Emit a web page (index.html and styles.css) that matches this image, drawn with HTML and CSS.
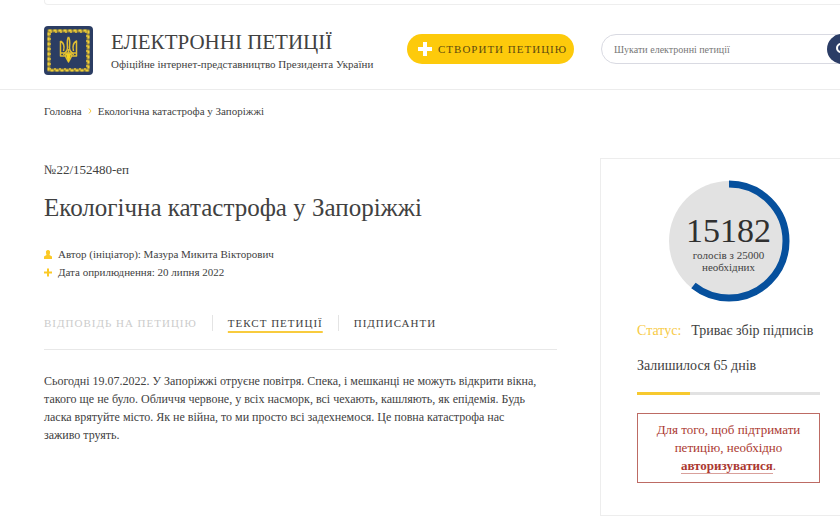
FILE: index.html
```html
<!DOCTYPE html>
<html lang="uk">

<head>
    <meta charset="UTF-8">
    <meta name="viewport" content="width=device-width, initial-scale=1">
    <title>Електронні петиції</title>
    <link rel="stylesheet" href="styles.css">
</head>

<body>
    <header class="header">
        <div class="wrap">
            <div class="top-panel"></div>
            <div class="header-row">
                <a class="brand" href="#">
                    <svg class="brand-logo" viewBox="0 0 49 49" aria-hidden="true">
                        <rect width="49" height="49" rx="4" fill="#2b3d63"/>
                        <rect x="5" y="5" width="39" height="39" fill="none" stroke="#8f8140" stroke-width="3"/>
                        <rect x="4.500" y="4.500" width="40" height="40" fill="none" stroke="#f0cf35" stroke-width="2" stroke-dasharray="3 2"/>
                        <rect x="6" y="6" width="37" height="37" fill="none" stroke="#e3c236" stroke-width="1.500" stroke-dasharray="2 3"/>
                        <g fill="none" stroke="#dfbd32" stroke-width="1.500" stroke-linejoin="round">
                            <path d="M24.500 11c-2 3-1 8-1 11 0 4-3 4-4 7M24.500 11c2 3 1 8 1 11 0 4 3 4 4 7"/>
                            <path d="M16.500 15v15h5c1 3 2 4 3 6 1-2 2-3 3-6h5V15c-4 2-4 6-3 10M16.500 15c4 2 4 6 3 10"/>
                            <path d="M16.500 27h16M24.500 23v12M21 30c1-3 3-3 3.500 0 .5-3 2.500-3 3.500 0"/>
                        </g>
                        <path d="M22 28h5l-1 4-1.500 4-1.500-4z" fill="#f5d21f"/>
                    </svg>
                    <span class="brand-text">
                        <span class="brand-title">ЕЛЕКТРОННІ ПЕТИЦІЇ</span>
                        <span class="brand-sub">Офіційне інтернет-представництво Президента України</span>
                    </span>
                </a>
                <button type="button" class="btn-create">
                    <svg class="btn-plus" viewBox="0 0 14 14" aria-hidden="true">
                        <path d="M5 0h4v5h5v4H9v5H5V9H0V5h5z" fill="#fff"/>
                    </svg>
                    СТВОРИТИ ПЕТИЦІЮ
                </button>
                <form class="search">
                    <input type="search" name="q" placeholder="Шукати електронні петиції" aria-label="Шукати електронні петиції">
                    <button type="submit" class="search-btn" aria-label="Пошук">
                        <svg viewBox="0 0 12 12" aria-hidden="true">
                            <circle cx="5" cy="5" r="4" fill="none" stroke="#fff" stroke-width="2"/>
                            <path d="M8 8l3 3" stroke="#fff" stroke-width="2"/>
                        </svg>
                    </button>
                </form>
            </div>
        </div>
    </header>

    <div class="wrap">
        <nav class="breadcrumbs">
            <a href="#">Головна</a>
            <svg class="crumb-arrow" viewBox="0 0 4 6" aria-hidden="true">
                <path d="M1 0.500L3 3 1 5.500" fill="none" stroke="#f5c842"/>
            </svg>
            <span>Екологічна катастрофа у Запоріжжі</span>
        </nav>

        <div class="content">
            <main class="petition">
                <div class="petition-number">№22/152480-еп</div>
                <h1>Екологічна катастрофа у Запоріжжі</h1>
                <ul class="meta">
                    <li>
                        <svg viewBox="0 0 8 9" aria-hidden="true">
                            <path d="M4 0a2 2 0 0 1 2 2.500C6 4 5.500 4.500 5.500 5L8 6.500V9H0V6.500L2.500 5C2.500 4.500 2 4 2 2.500A2 2 0 0 1 4 0z" fill="#fbc926"/>
                        </svg>
                        Автор (ініціатор): Мазура Микита Вікторович
                    </li>
                    <li>
                        <svg viewBox="0 0 8 9" aria-hidden="true">
                            <path d="M3 .5h2v3h3v2H5v3H3v-3H0v-2h3z" fill="#fbc926"/>
                        </svg>
                        Дата оприлюднення: 20 липня 2022
                    </li>
                </ul>
                <nav class="tabs">
                    <a class="tab disabled">ВІДПОВІДЬ НА ПЕТИЦІЮ</a>
                    <a class="tab active" href="#">ТЕКСТ ПЕТИЦІЇ</a>
                    <a class="tab" href="#">ПІДПИСАНТИ</a>
                </nav>
                <p class="petition-text">Сьогодні 19.07.2022. У Запоріжжі отруєне повітря. Спека, і мешканці не можуть відкрити вікна, такого ще не було. Обличчя червоне, у всіх насморк, всі чехають, кашляють, як епідемія. Будь ласка врятуйте місто. Як не війна, то ми просто всі задехнемося. Це повна катастрофа нас заживо труять.</p>
            </main>

            <aside class="votes">
                <div class="ring">
                    <svg viewBox="0 0 122 122" aria-hidden="true">
                        <circle cx="61" cy="61" r="60" fill="#e2e2e2"/>
                        <circle cx="61" cy="61" r="57" fill="none" stroke="#06509d" stroke-width="7" pathLength="25000" stroke-dasharray="15182 25000" transform="rotate(-90 61 61)"/>
                    </svg>
                    <div class="ring-label">
                        <span class="ring-count">15182</span>
                        <span>голосів з 25000</span>
                        <span>необхідних</span>
                    </div>
                </div>
                <div class="status"><span class="status-label">Статус:</span>Триває збір підписів</div>
                <div class="days">Залишилося 65 днів</div>
                <div class="progress"><div class="progress-bar" style="width: 29%"></div></div>
                <div class="notice">Для того, щоб підтримати петицію, необхідно <a href="#">авторизуватися</a>.</div>
            </aside>
        </div>
    </div>
</body>

</html>
```
FILE: styles.css
```css
* {
    box-sizing: border-box;
}

body {
    margin: 0;
    font-family: Georgia, "Liberation Serif", serif;
    font-size: 12px;
    line-height: 18px;
    color: #414141;
    background-color: #fff;
    overflow-x: hidden;
}

a {
    color: inherit;
    text-decoration: none;
}

/* the right edge runs a little past the window */
.wrap {
    margin-left: 44px;
    margin-right: -17px;
}

.header {
    border-bottom: 1px solid #ececec;
}

.top-panel {
    height: 5px;
    border: 1px solid #eee;
    border-top: 0;
    border-radius: 0 0 4px 4px;
}

.header-row {
    display: grid;
    grid-template-columns: 1fr 167px 256px;
    column-gap: 27px;
    align-items: start;
    height: 84px;
    padding-top: 21px;
}

.brand {
    display: flex;
    gap: 18px;
    white-space: nowrap;
}

.brand-logo {
    width: 49px;
    height: 49px;
    flex: none;
}

.brand-text {
    display: flex;
    flex-direction: column;
    padding-top: 4px;
}

.brand-title {
    font-size: 21px;
    line-height: 24px;
}

.brand-sub {
    font-size: 11px;
    line-height: 20px;
}

.btn-create {
    display: flex;
    align-items: center;
    gap: 6px;
    height: 30px;
    margin-top: 8px;
    padding: 0 11px;
    border: 0;
    border-radius: 15px;
    background-color: #fdca0b;
    color: #5d4a10;
    font-family: inherit;
    font-size: 11px;
    letter-spacing: 1px;
    white-space: nowrap;
}

.btn-plus {
    width: 14px;
    height: 14px;
    flex: none;
}

.search {
    display: flex;
    height: 30px;
    margin-top: 8px;
    border: 1px solid #d9dae2;
    border-radius: 15px;
}

.search input {
    flex: 1;
    min-width: 0;
    padding: 0 12px;
    border: 0;
    outline: 0;
    background: none;
    font-family: inherit;
    font-size: 10px;
}

.search input::placeholder {
    color: #777;
}

.search-btn {
    display: flex;
    align-items: center;
    width: 30px;
    height: 30px;
    margin: -1px;
    padding: 0 9px;
    border: 0;
    border-radius: 15px;
    background-color: #2b3d66;
}

.search-btn svg {
    width: 12px;
    height: 12px;
}

.breadcrumbs {
    display: flex;
    align-items: center;
    gap: 6px;
    padding-top: 12px;
    font-size: 11px;
}

.crumb-arrow {
    width: 4px;
    height: 6px;
}

.content {
    display: grid;
    grid-template-columns: 1fr 257px;
    column-gap: 43px;
    align-items: start;
    margin-top: 38px;
}

.petition-number {
    padding-top: 3px;
    font-size: 13px;
}

h1 {
    margin: 14px 0 22px;
    font-size: 25px;
    line-height: 30px;
    font-weight: normal;
}

.meta {
    margin: 0;
    padding: 0;
    list-style: none;
    font-size: 11px;
}

.meta li {
    display: flex;
    align-items: center;
    gap: 6px;
}

.meta svg {
    width: 8px;
    height: 9px;
}

.tabs {
    display: flex;
    align-items: center;
    margin-top: 34px;
    padding-bottom: 18px;
    border-bottom: 1px solid #e8e8e8;
    font-size: 11px;
    line-height: 16px;
    letter-spacing: 1px;
    white-space: nowrap;
}

.tab + .tab::before {
    content: "";
    height: 16px;
    margin: 0 15px;
    border-left: 1px solid #e4e4e4;
}

.tab {
    display: flex;
    align-items: center;
}

.disabled {
    color: #ccc;
}

.active {
    text-decoration: underline 2px #f8cb3e;
    text-underline-offset: 4px;
}

.petition-text {
    margin: 22px 0 0;
    padding-right: 18px;
}

.votes {
    padding: 21px 36px 32px;
    border: 1px solid #ededed;
}

.ring {
    display: grid;
    justify-content: center;
}

.ring svg,
.ring-label {
    grid-area: 1 / 1;
}

.ring svg {
    width: 122px;
    height: 122px;
}

.ring-label {
    display: flex;
    flex-direction: column;
    align-items: center;
    padding-top: 33px;
    font-size: 11px;
    line-height: 12px;
}

.ring-count {
    font-size: 34px;
    line-height: 36px;
    color: #303030;
}

.status,
.days {
    font-size: 14px;
    line-height: 18px;
    white-space: nowrap;
}

.status {
    margin-top: 20px;
}

.status-label {
    margin-right: 10px;
    color: #f7ca45;
}

.days {
    margin-top: 17px;
}

.progress {
    height: 3px;
    margin-top: 17px;
    background-color: #e2e2e2;
}

.progress-bar {
    height: 3px;
    background-color: #f7c92f;
}

.notice {
    margin-top: 18px;
    padding: 7px 16px;
    border: 1px solid #bd6b64;
    color: #ab3931;
    font-size: 13px;
    text-align: center;
}

.notice a {
    border-bottom: 1px solid #d9a09b;
    font-weight: bold;
}
```
